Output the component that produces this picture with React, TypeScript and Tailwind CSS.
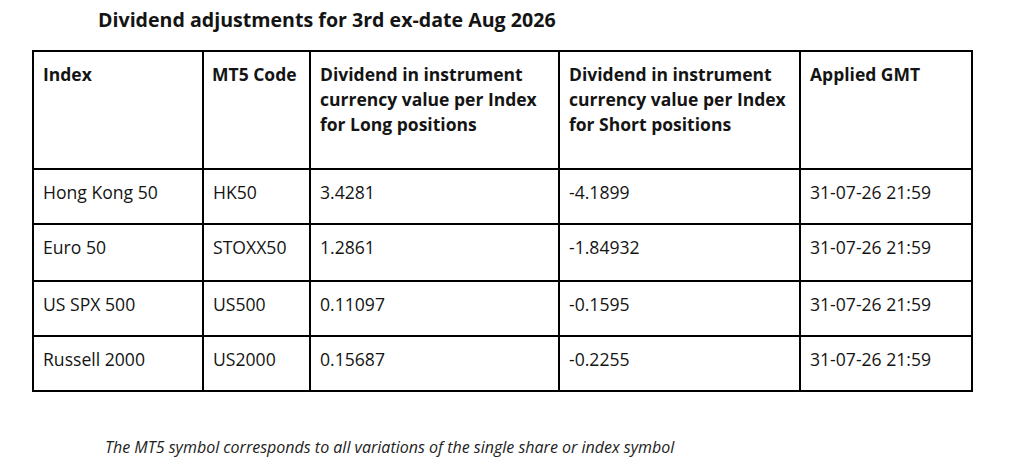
import React from "react";

const rows = [
  { h: "h-[55px]", c: ["Hong Kong 50", "HK50", "3.4281", "-4.1899", "31-07-26 21:59"] },
  { h: "h-[57px]", c: ["Euro 50", "STOXX50", "1.2861", "-1.84932", "31-07-26 21:59"] },
  { h: "h-[55px]", c: ["US SPX 500", "US500", "0.11097", "-0.1595", "31-07-26 21:59"] },
  { h: "h-[55px]", c: ["Russell 2000", "US2000", "0.15687", "-0.2255", "31-07-26 21:59"] },
];

const headers = [
  ["Index"],
  ["MT5 Code"],
  ["Dividend in instrument", "currency value per Index", "for Long positions"],
  ["Dividend in instrument", "currency value per Index", "for Short positions"],
  ["Applied GMT"],
];

export default function App() {
  return (
    <div className="w-[1024px] h-[473px] bg-white text-[#141414] font-['Open_Sans',_'Liberation_Sans',_sans-serif] overflow-hidden">
      <div className="h-[41px] pl-[98px] pt-[7px]">
        <h1 className="text-[19.6px] leading-[26px] font-bold whitespace-nowrap">Dividend adjustments for 3rd ex-date Aug 2026</h1>
      </div>
      <div className="pl-[32px] pt-[9px]">
        <div className="grid grid-cols-[170px_107px_249px_241px_172px] w-[941px] border-l-2 border-t-2 border-black leading-[25px]">
          {headers.map((lines, i) => (
            <div key={i} className={`h-[118px] border-r-2 border-b-2 border-black pt-[10px] font-bold text-[17.5px] ${i === 1 ? "pl-[8px]" : "pl-[9px]"}`}>
              {lines.map((l, j) => (
                <div key={j} className="whitespace-nowrap">{l}</div>
              ))}
            </div>
          ))}
          {rows.map((r, ri) =>
            r.c.map((t, ci) => (
              <div key={`${ri}-${ci}`} className={`${r.h} border-r-2 border-b-2 border-black pt-[10px] pl-[9px] whitespace-nowrap text-[17.6px]`}>
                {t}
              </div>
            ))
          )}
        </div>
      </div>
      <div className="pl-[105px] pt-[45px]">
        <p className="italic text-[16px] leading-[20px] text-[#222] whitespace-nowrap">
          The MT5 symbol corresponds to all variations of the single share or index symbol
        </p>
      </div>
    </div>
  );
}
